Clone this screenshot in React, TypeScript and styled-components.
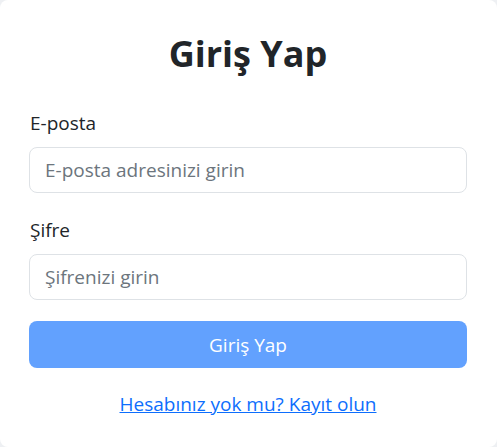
import React from "react";
import styled, { createGlobalStyle } from "styled-components";

const Global = createGlobalStyle`
  html, body { margin: 0; padding: 0; background: #eef0f3; }
  body { font-family: "Open Sans", "Noto Sans", sans-serif; color: #212529; }
  * { box-sizing: border-box; }
`;

const Card = styled.div`
  width: 497px;
  height: 447px;
  background: #ffffff;
  border-radius: 8px;
  padding: 30px 30px 0 29px;
  display: flex;
  flex-direction: column;
`;

const Title = styled.h1`
  margin: 0 0 32px;
  font-size: 36px;
  line-height: 48px;
  font-weight: 700;
  text-align: center;
  color: #212529;
`;

const Field = styled.div`
  display: flex;
  flex-direction: column;
  gap: 10px;
  margin-bottom: 24px;
`;

const Label = styled.label`
  font-size: 19px;
  line-height: 27px;
  color: #212529;
  padding-left: 1px;
`;

const Input = styled.input`
  height: 46px;
  width: 100%;
  border: 1px solid #dee2e6;
  border-radius: 8px;
  padding: 0 15px;
  font-family: inherit;
  font-size: 19px;
  color: #212529;
  background: #fff;
  outline: none;
  &::placeholder { color: #6c757d; opacity: 1; }
`;

const Button = styled.button`
  height: 47px;
  width: 100%;
  margin-top: -3px;
  border: none;
  border-radius: 8px;
  background: #62a1fe;
  color: #ffffff;
  font-family: inherit;
  font-size: 19px;
  cursor: default;
`;

const Footer = styled.div`
  margin-top: 23px;
  text-align: center;
  font-size: 19px;
  line-height: 27px;
`;

const Link = styled.a`
  color: #0d6efd;
  text-decoration: underline;
`;

export default function App() {
  return (
    <>
      <Global />
      <Card>
        <Title>Giriş Yap</Title>
        <Field>
          <Label htmlFor="email">E-posta</Label>
          <Input id="email" type="email" placeholder="E-posta adresinizi girin" />
        </Field>
        <Field>
          <Label htmlFor="pw">Şifre</Label>
          <Input id="pw" type="password" placeholder="Şifrenizi girin" />
        </Field>
        <Button disabled>Giriş Yap</Button>
        <Footer>
          <Link href="#">Hesabınız yok mu? Kayıt olun</Link>
        </Footer>
      </Card>
    </>
  );
}
